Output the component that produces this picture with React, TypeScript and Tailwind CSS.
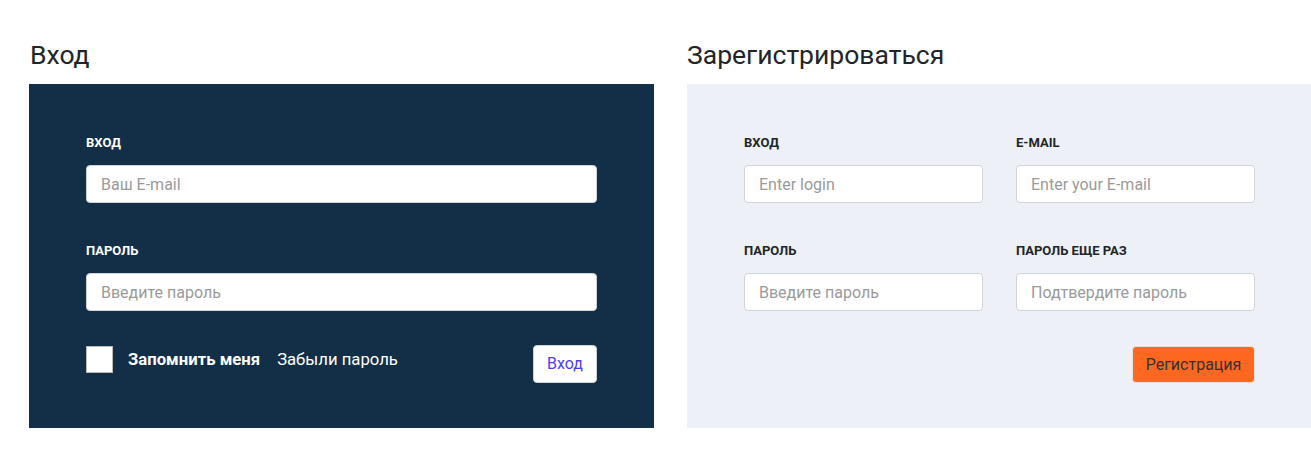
export default function App() {
  return (
    <div className="min-h-screen bg-white font-['Roboto',sans-serif] text-[#212529]">
      <div className="flex gap-[33px] pl-[29px] pt-[40px]">
        <div className="w-[625px] shrink-0">
          <h2 className="text-[26.5px] leading-[30px] font-normal pl-px mb-[14px]">Вход</h2>
          <div className="bg-[#132f47] px-[57px] pt-[50px] pb-[45px]">
            <label className="block text-[13px] leading-[18px] font-bold text-white uppercase mb-[13px]">Вход</label>
            <input
              className="block w-full h-[38px] rounded-[4px] bg-white border border-[#ced4da] px-[14px] text-[16px] placeholder:text-[#9a9a9a] outline-none"
              placeholder="Ваш E-mail"
            />
            <label className="block text-[13px] leading-[18px] font-bold text-white uppercase mt-[39px] mb-[13px]">Пароль</label>
            <input
              type="password"
              className="block w-full h-[38px] rounded-[4px] bg-white border border-[#ced4da] px-[14px] text-[16px] placeholder:text-[#9a9a9a] outline-none"
              placeholder="Введите пароль"
            />
            <div className="flex items-start mt-[34px]">
              <span className="w-[27px] h-[27px] mt-px bg-white border border-[#bbb] mr-[15px]" />
              <span className="text-[16.7px] leading-[30px] font-bold text-white mr-[17px]">Запомнить меня</span>
              <span className="text-[16.7px] leading-[30px] text-white">Забыли пароль</span>
              <button className="ml-auto h-[38px] w-[64px] rounded-[4px] bg-white border border-[#ced4da] text-[16px] text-[#4d3df2]">
                Вход
              </button>
            </div>
          </div>
        </div>

        <div className="w-[625px] shrink-0">
          <h2 className="text-[26.5px] leading-[30px] font-normal mb-[14px]">Зарегистрироваться</h2>
          <div className="bg-[#edf0f7] px-[57px] pt-[50px] pb-[45px]">
            <div className="grid grid-cols-2 gap-x-[33px]">
              <div>
                <label className="block text-[13px] leading-[18px] font-bold text-[#212529] uppercase mb-[13px]">Вход</label>
                <input
                  className="block w-full h-[38px] rounded-[4px] bg-white border border-[#ced4da] px-[14px] text-[16px] placeholder:text-[#9a9a9a] outline-none"
                  placeholder="Enter login"
                />
              </div>
              <div>
                <label className="block text-[13px] leading-[18px] font-bold text-[#212529] uppercase mb-[13px]">E-mail</label>
                <input
                  className="block w-full h-[38px] rounded-[4px] bg-white border border-[#ced4da] px-[14px] text-[16px] placeholder:text-[#9a9a9a] outline-none"
                  placeholder="Enter your E-mail"
                />
              </div>
              <div className="mt-[39px]">
                <label className="block text-[13px] leading-[18px] font-bold text-[#212529] uppercase mb-[13px]">Пароль</label>
                <input
                  type="password"
                  className="block w-full h-[38px] rounded-[4px] bg-white border border-[#ced4da] px-[14px] text-[16px] placeholder:text-[#9a9a9a] outline-none"
                  placeholder="Введите пароль"
                />
              </div>
              <div className="mt-[39px]">
                <label className="block text-[13px] leading-[18px] font-bold text-[#212529] uppercase mb-[13px]">Пароль еще раз</label>
                <input
                  type="password"
                  className="block w-full h-[38px] rounded-[4px] bg-white border border-[#ced4da] px-[14px] text-[16px] placeholder:text-[#9a9a9a] outline-none"
                  placeholder="Подтвердите пароль"
                />
              </div>
            </div>
            <div className="flex justify-end mt-[35px]">
              <button className="h-[37px] w-[123px] rounded-[4px] bg-[#fe6720] border border-[#e8e0da] text-[16px] text-[#333]">
                Регистрация
              </button>
            </div>
          </div>
        </div>
      </div>
    </div>
  )
}
